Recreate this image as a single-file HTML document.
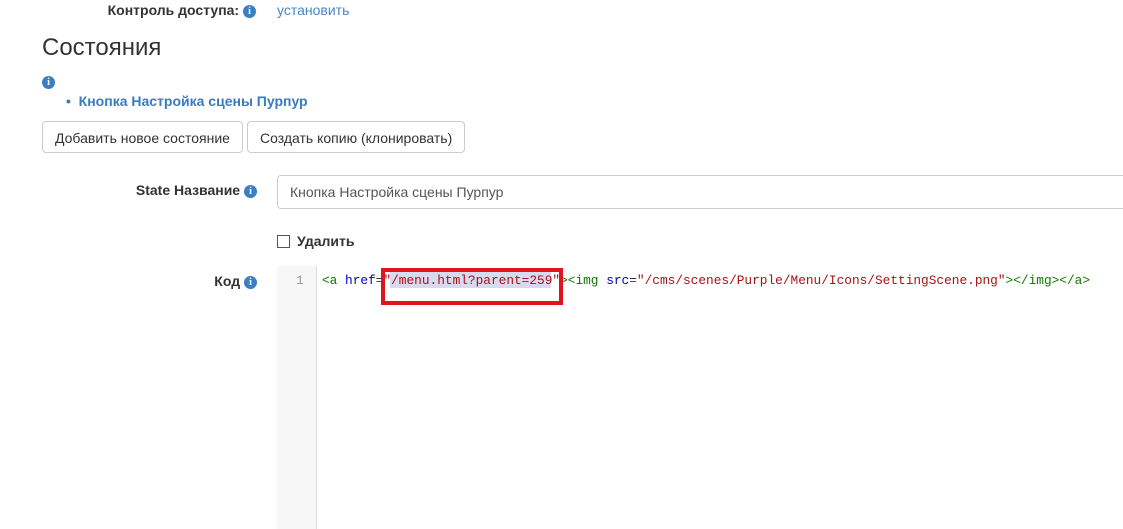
<!DOCTYPE html>
<html><head><meta charset="utf-8"><style>
body{margin:0;width:1123px;height:529px;overflow:hidden;background:#fff;font-family:"Liberation Sans",sans-serif;font-size:14px;color:#333;position:relative}
.a{position:absolute;white-space:nowrap}
.i{display:inline-block;width:13px;height:13px;border-radius:50%;background:#3a7fc4;color:#fff;font:bold 10px/13px "Liberation Serif",serif;text-align:center;vertical-align:1px}
.lbl{font-weight:bold;text-align:right;width:220px}
.btn{border:1px solid #ccc;border-radius:4px;height:32px;line-height:32px;padding:0 12px;box-sizing:border-box;background:#fff}
.code{font-family:"Liberation Mono",monospace;font-size:12.8px;white-space:pre}
</style></head><body>
<div class="a lbl" style="left:36px;top:2px">Контроль доступа: <span class="i">i</span></div>
<div class="a" style="left:277px;top:2px;color:#4a86c5">установить</div>
<div class="a" style="left:42px;top:34px;font-size:24px;color:#333">Состояния</div>
<div class="a" style="left:42px;top:73px"><span class="i">i</span></div>
<div class="a" style="left:66px;top:93px;font-weight:bold;color:#3a7bbd">•&nbsp;&nbsp;Кнопка Настройка сцены Пурпур</div>
<div class="a btn" style="left:42px;top:121px;width:201px">Добавить новое состояние</div>
<div class="a btn" style="left:247px;top:121px;width:218px">Создать копию (клонировать)</div>
<div class="a lbl" style="left:37px;top:182px">State Название <span class="i">i</span></div>
<div class="a" style="left:277px;top:175px;width:860px;height:34px;box-sizing:border-box;border:1px solid #ccc;border-radius:4px;padding:0 12px;line-height:32px;color:#555">Кнопка Настройка сцены Пурпур</div>
<div class="a" style="left:277px;top:235px;width:11px;height:11px;border:1px solid #555"></div>
<div class="a" style="left:297px;top:233px;font-weight:bold">Удалить</div>
<div class="a lbl" style="left:37px;top:273px">Код <span class="i">i</span></div>
<div class="a" style="left:277px;top:266px;width:39px;height:263px;background:#f7f7f7;border-right:1px solid #ddd"></div>
<div class="a code" style="left:296px;top:273px;color:#999">1</div>
<div class="a" style="left:390px;top:271px;width:161px;height:17px;background:#d9d9f0"></div>
<div class="a code" style="left:322px;top:273px"><span style="color:#170">&lt;a</span> <span style="color:#00c">href</span>=<span style="color:#a11">"/menu.html?parent=259"</span><span style="color:#170">&gt;&lt;img</span> <span style="color:#00c">src</span>=<span style="color:#a11">"/cms/scenes/Purple/Menu/Icons/SettingScene.png"</span><span style="color:#170">&gt;&lt;/img&gt;&lt;/a&gt;</span></div>
<div class="a" style="left:381px;top:268px;width:174px;height:29px;border:4px solid #e0141e"></div>
</body></html>
